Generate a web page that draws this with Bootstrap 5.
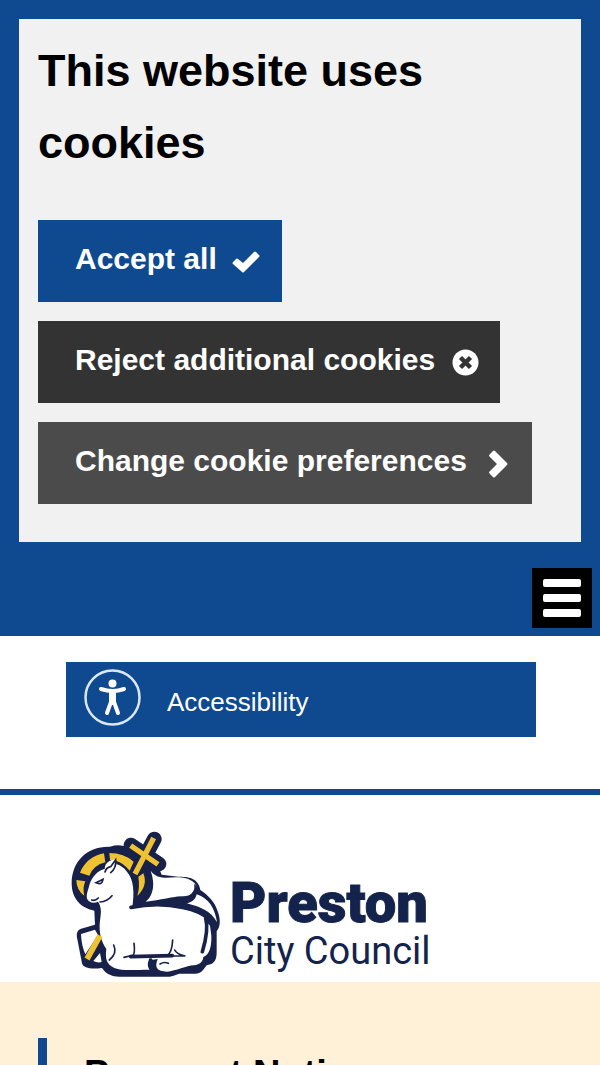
<!DOCTYPE html>
<html lang="en">
<head>
<meta charset="utf-8">
<meta name="viewport" content="width=device-width, initial-scale=1">
<title>Preston City Council</title>
<link href="https://cdn.jsdelivr.net/npm/bootstrap@5.3.0/dist/css/bootstrap.min.css" rel="stylesheet">
<style>
  :root { --brand: #0f498f; --navy: #14234c; }
  body { font-family: "Liberation Sans", Arial, sans-serif; font-size: 26px; color: #000; overflow-x: hidden; }
  .site-top { background: var(--brand); padding: 19px 19px 26px; }
  .cookie-panel { background: #f1f1f1; padding: 16px 19px 38px; }
  .cookie-panel h2 { font-size: 45px; line-height: 72px; font-weight: 700; margin-bottom: 41px; }
  .cookie-actions { gap: 19px; }
  .cookie-btn { --bs-btn-border-width: 0; --bs-btn-border-radius: 0; --bs-btn-color: #fff; --bs-btn-hover-color: #fff; font-size: 30px; line-height: 48px; font-weight: 700; padding: 15px 18px 19px 37px; }
  .cookie-btn svg { width: 32px; height: 32px; margin: 6px 0 0 15px; }
  .accept { --bs-btn-bg: var(--brand); --bs-btn-hover-bg: #0b3972; }
  .reject { --bs-btn-bg: #333; --bs-btn-hover-bg: #222; }
  .change { --bs-btn-bg: #4b4b4b; --bs-btn-hover-bg: #3b3b3b; }
  .menu-strip { background: var(--brand); padding: 0 8px 8px; }
  .menu-btn { background: #000; border: 0; width: 60px; height: 60px; padding: 11px; }
  .menu-btn span { display: block; height: 8px; border-radius: 2px; background: #fff; }
  .menu-btn span + span { margin-top: 7px; }
  .tools { padding: 26px 64px 52px 66px; border-bottom: 6px solid var(--brand); }
  .access-link { background: var(--brand); color: #fff; padding: 7px 18px 11px; gap: 26px; line-height: 40px; }
  .access-link:hover { color: #fff; }
  .access-link svg { width: 57px; height: 57px; }
  .brand-row { padding: 36px 66px 5px; }
  .brand-row svg { display: block; width: 372px; max-width: 100%; font-family: Roboto, "Liberation Sans", sans-serif; fill: var(--navy); }
  .notice-area { background: #fef1d7; padding: 56px 38px; }
  .notice { border-left: 9px solid var(--brand); padding: 6px 37px; }
  .notice h1 { font-size: 38px; line-height: 60px; font-weight: 700; }
</style>
</head>
<body>
<header>
  <section class="site-top" aria-labelledby="cookie-title">
    <div class="cookie-panel">
      <h2 id="cookie-title">This website uses cookies</h2>
      <div class="cookie-actions d-flex flex-column align-items-start">
        <button type="button" class="btn cookie-btn accept d-flex align-items-center">Accept all
          <svg viewBox="0 0 32 32" aria-hidden="true"><path d="M1 16l3-3q1-1 2 0l5 4L22 6q1-1 2 0l3 3q1 1 0 2L12 26q-1 1-2 0L1 18q-1-1 0-2z" fill="#fff"/></svg></button>
        <button type="button" class="btn cookie-btn reject d-flex align-items-center">Reject additional cookies
          <svg viewBox="0 0 32 32" aria-hidden="true"><circle cx="15.500" cy="15.500" r="13" fill="#fff"/><path d="M10.500 10.500l10 10M20.500 10.500l-10 10" stroke="#333" stroke-width="4.500"/></svg></button>
        <button type="button" class="btn cookie-btn change d-flex align-items-center">Change cookie preferences
          <svg viewBox="0 0 32 32" aria-hidden="true"><path d="M7.500 8.500q-1-1 0-2L11 3q1-1 2 0L25 15q1 1 0 2L13 29q-1 1-2 0l-3.500-3.500q-1-1 0-2L15 16z" fill="#fff"/></svg></button>
      </div>
    </div>
  </section>
  <div class="menu-strip d-flex justify-content-end">
    <button type="button" class="menu-btn" aria-label="Menu"><span></span><span></span><span></span></button>
  </div>
  <div class="tools">
    <a href="#" class="access-link d-flex align-items-center text-decoration-none">
      <svg viewBox="0 0 57 57" aria-hidden="true"><circle cx="28.500" cy="28.500" r="27" fill="none" stroke="#dce8fa" stroke-width="2.500"/><circle cx="28.500" cy="14.500" r="4" fill="#fff"/><path d="M17 20q12 4 23 0M28.500 23v11M27 22v11l-4 11M30 22v11l4 11" fill="none" stroke="#fff" stroke-width="4" stroke-linecap="round"/></svg>
      <span class="pt-2">Accessibility</span></a>
  </div>
  <div class="brand-row">
    <a href="#" aria-label="Preston City Council home"><svg viewBox="0 0 372 146">
      <g transform="translate(-6 -11) scale(.33333)">
        <path d="M150 80C80 78 35 125 35 190c0 48 30 75 68 82l2 42-42 12c-14 6-14 18-11 32l14 72c4 16 30 18 60 14 12 18 30 26 52 26h145c15 0 22-6 35-9h48c20 0 25-14 34-25 26-4 30-18 30-42v-60c14-16 10-42 3-60-8-28-28-48-52-64-6-38-38-40-66-40l-50-6-16-40-80-40q-28-14-59-4z" fill="#172149"/>
        <path d="M283 57l-58 108M213 75l84 57" stroke="#172149" stroke-width="44" stroke-linecap="round"/>
        <g fill="#efc231"><path d="M60 158q20-48 72-58l4 27q-35 8-48 40zM148 99q44 0 73 26l-12 27q-20-24-40-29l-19-3zM49 180l27 4q-9 20-3 43-23-15-24-47zM250 160q15 36-18 68 8-28 3-58z"/></g>
        <path d="M281 54l-56 108M212 77l82 56" stroke="#efc231" stroke-width="16"/>
        <path d="M167 118c-15 2-32 8-33 29-22 5-37 23-45 45-3 15-11 30-8 44 6 13 22 15 33 9 10 14 10 31 7 49-6 38 0 67 18 93-3 24-3 45 24 57 26 10 62 5 106 5 4-10 2-20 0-28l24-4c-10 26-3 36 28 38 26-2 60-18 80-19 20-2 28-12 29-25 20-8 25-35 24-64l-4-30-12-13c0-24-34-42-63-43-50-4-108-6-158 0 6-40 6-83-18-108q-10-14-30-21z" fill="#fff"/>
        <path d="M272 152c18 26 45 21 76 20 32-2 56 12 61 26-11 22-14 29-39 31-30 0-70 12-113 16 22-18 30-50 15-93zM410 223c37 12 55 43 61 84-18-35-52-46-90-57 16-4 25-10 29-27zM63 342l42-13 9 16-38 58q-12-28-13-61zM100 423l20-24 5 27q-12 4-25-3z" fill="#fff"/>
        <path d="M81 417l39-70" stroke="#efc231" stroke-width="17"/>
        <path d="M213 262q80-16 155 0 48 8 84 38M437 295q10 35-10 100M272 420q-8 20 4 28M212 410l125-3" stroke="#172149" stroke-width="11" fill="none" stroke-linecap="round"/>
        <path d="M108 188l21-10q-3 14-12 13zM95 240q10 4 20-6M135 156q4-14 17-16l15-21q3 25-15 39M120 246q21-1 36-19M161 375q12 25-13 45M222 370q4 32-4 36l-26 6M338 360q-2 40-18 48h56q-26-5-32-18M300 432q13-8 25-2M343 243q14-20 26 0l-6-10-16 0M405 195q5 20-18 35" stroke="#172149" stroke-width="5" fill="none" stroke-linecap="round"/>
      </g>
      <text x="164" y="91" font-size="56" font-weight="900" stroke="#14234c">Preston</text>
      <text x="164" y="133" font-size="38">City Council</text>
    </svg></a>
  </div>
</header>
<main class="notice-area"><div class="notice"><h1>Payment Notice</h1></div></main>
<script src="https://cdn.jsdelivr.net/npm/bootstrap@5.3.0/dist/js/bootstrap.bundle.min.js"></script>
</body>
</html>
